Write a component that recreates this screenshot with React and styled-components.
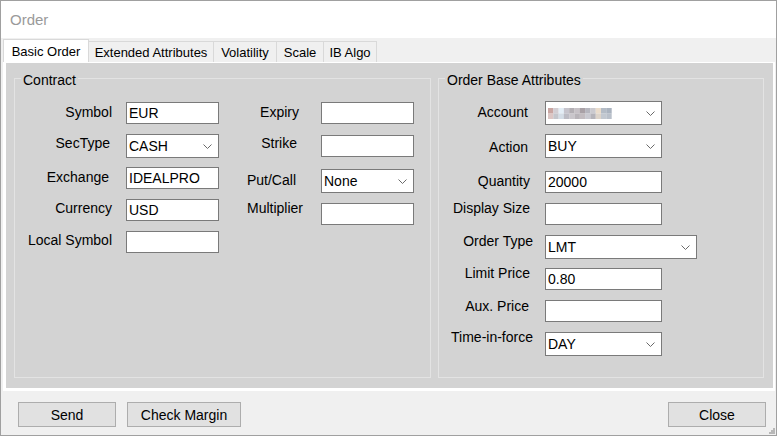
import styled, { createGlobalStyle } from "styled-components";

const GlobalStyle = createGlobalStyle`
  html, body {
    margin: 0;
    padding: 0;
    background: #ffffff;
  }
  body {
    font-family: "Liberation Sans", Arial, sans-serif;
  }
`;

// blurred account id in the reference, drawn as a pixel mosaic
const MOSAIC = [
  ["#c9a6a2", "#d2ced3", "#e4eef6", "#c6c4cc", "#b3afb4", "#c6c1c6", "#a9a1a6", "#b6b6be", "#cbcacf", "#eadccb", "#b4bcc6", "#aab3bf"],
  ["#dcc6c4", "#c4c6cc", "#d4dde6", "#bcbcc4", "#c9c6cb", "#b8b4b9", "#c2bcc0", "#c9c9d0", "#b5b4ba", "#ddd4ca", "#c2c8d0", "#b9c0ca"],
];

const TABS = [
  { name: "Basic Order", w: 86, active: true },
  { name: "Extended Attributes", w: 126 },
  { name: "Volatility", w: 64 },
  { name: "Scale", w: 48 },
  { name: "IB Algo", w: 54 },
];

const CONTRACT_A = [
  { label: "Symbol", value: "EUR", h: 32, dy: 2, pr: 0 },
  { label: "SecType", value: "CASH", combo: true, h: 33, dy: 1, pr: 2 },
  { label: "Exchange", value: "IDEALPRO", h: 32, dy: 2, pr: 3 },
  { label: "Currency", value: "USD", h: 32, dy: 1, pr: 0 },
  { label: "Local Symbol", value: "", h: 32, dy: 1, pr: 0 },
];

const CONTRACT_B = [
  { label: "Expiry", value: "", h: 33, dy: 2, pr: 5 },
  { label: "Strike", value: "", h: 34, dy: 0, pr: 7 },
  { label: "Put/Call", value: "None", combo: true, h: 34, dy: 3, pr: 8 },
  { label: "Multiplier", value: "", h: 34, dy: -3, pr: 1 },
];

const ORDER = [
  { label: "Account", combo: true, blurred: true, h: 33, dy: 3, pr: 5 },
  { label: "Action", value: "BUY", combo: true, h: 37, dy: 5, pr: 5 },
  { label: "Quantity", value: "20000", h: 32, dy: 2, pr: 3 },
  { label: "Display Size", value: "", h: 32, dy: -3, pr: 3 },
  { label: "Order Type", value: "LMT", combo: true, w: 152, h: 33, dy: -2, pr: 0 },
  { label: "Limit Price", value: "0.80", h: 32, dy: -3, pr: 3 },
  { label: "Aux. Price", value: "", h: 32, dy: -2, pr: 4 },
  { label: "Time-in-force", value: "DAY", combo: true, h: 32, dy: -3, pr: 0 },
];

function Chevron() {
  return (
    <ChevronIcon width="9" height="5" viewBox="0 0 9 5" aria-hidden>
      <polyline points="0.5,0.5 4.5,4.5 8.5,0.5" fill="none" stroke="#6a6a6a" strokeWidth="1" />
    </ChevronIcon>
  );
}

function Mosaic() {
  return (
    <svg width="64" height="11" viewBox="0 0 64 11" aria-hidden>
      {MOSAIC.map((row, r) =>
        row.map((c, i) => (
          <rect key={`${r}-${i}`} x={i * 5.3} y={r * 5.5} width="5.4" height="5.6" fill={c} />
        ))
      )}
    </svg>
  );
}

function Field({ f, labelW, gap, ctrlW }) {
  const w = f.w || ctrlW;
  return (
    <Row $h={f.h} $gap={gap}>
      <Label $w={labelW} $pr={f.pr} $dy={f.dy}>
        {f.label}
      </Label>
      {f.combo ? (
        <Combo $w={w}>
          {f.blurred ? <Mosaic /> : <span>{f.value}</span>}
          <Chevron />
        </Combo>
      ) : (
        <TextBox $w={w} value={f.value} readOnly />
      )}
    </Row>
  );
}

export default function App() {
  return (
    <>
      <GlobalStyle />
      <Window>
        <TitleBar>Order</TitleBar>

        <TabStrip>
          {TABS.map((t) => (
            <Tab key={t.name} $w={t.w} $active={t.active}>
              {t.name}
            </Tab>
          ))}
        </TabStrip>

        <TabPage>
          <Panel>
            <Group $w={417} $pt={14}>
              <Legend>Contract</Legend>
              <GroupBody>
                <Column>
                  {CONTRACT_A.map((f) => (
                    <Field key={f.label} f={f} labelW={91} gap={14} ctrlW={93} />
                  ))}
                </Column>
                <Column>
                  {CONTRACT_B.map((f) => (
                    <Field key={f.label} f={f} labelW={76} gap={17} ctrlW={93} />
                  ))}
                </Column>
              </GroupBody>
            </Group>

            <Group $w={326} $pt={13}>
              <Legend>Order Base Attributes</Legend>
              <Column>
                {ORDER.map((f) => (
                  <Field key={f.label} f={f} labelW={88} gap={12} ctrlW={117} />
                ))}
              </Column>
            </Group>
          </Panel>
        </TabPage>

        <ButtonBar>
          <Button $w={98}>Send</Button>
          <Button $w={114}>Check Margin</Button>
          <Button $w={98} $right>
            Close
          </Button>
        </ButtonBar>

        <Grip width="6" height="6" viewBox="0 0 6 6" aria-hidden>
          <rect x="4" y="0" width="2" height="2" fill="#b8b8b8" />
          <rect x="2" y="2" width="2" height="2" fill="#b8b8b8" />
          <rect x="4" y="2" width="2" height="2" fill="#b8b8b8" />
          <rect x="0" y="4" width="2" height="2" fill="#b8b8b8" />
          <rect x="2" y="4" width="2" height="2" fill="#b8b8b8" />
          <rect x="4" y="4" width="2" height="2" fill="#b8b8b8" />
        </Grip>
      </Window>
    </>
  );
}

const Window = styled.div`
  position: relative;
  width: 777px;
  height: 436px;
  box-sizing: border-box;
  border: 1px solid #a0a0a0;
  background: #f0f0f0;
  display: flex;
  flex-direction: column;
  font-family: "Liberation Sans", Arial, sans-serif;
  color: #000;
`;

const TitleBar = styled.div`
  height: 37px;
  flex-shrink: 0;
  display: flex;
  align-items: center;
  padding-left: 9px;
  background: #ffffff;
  font-size: 15px;
  color: #9a9a9a;
`;

const TabStrip = styled.div`
  height: 23px;
  margin-top: 1px;
  flex-shrink: 0;
  display: flex;
  align-items: flex-end;
  padding-left: 2px;
`;

const Tab = styled.div`
  box-sizing: border-box;
  width: ${({ $w }) => $w}px;
  height: ${({ $active }) => ($active ? 23 : 21)}px;
  padding-top: ${({ $active }) => ($active ? 0 : 1)}px;
  display: flex;
  align-items: center;
  justify-content: center;
  border: 1px solid #d9d9d9;
  border-bottom: none;
  background: ${({ $active }) => ($active ? "#ffffff" : "#f0f0f0")};
  font-size: 13px;
  white-space: nowrap;

  & + & {
    margin-left: -1px;
  }
`;

const TabPage = styled.div`
  width: 772px;
  height: 329px;
  margin-left: 2px;
  box-sizing: border-box;
  padding: 1px 2px 3px 3px;
  background: #ffffff;
  flex-shrink: 0;
`;

const Panel = styled.div`
  height: 100%;
  box-sizing: border-box;
  display: flex;
  gap: 7px;
  padding: 5px 9px 10px 8px;
  background: #d3d3d3;
`;

const Group = styled.fieldset`
  box-sizing: border-box;
  width: ${({ $w }) => $w}px;
  margin: 0;
  min-width: 0;
  padding: ${({ $pt }) => $pt}px 0 0 6px;
  border: 1px solid #e3e3e3;
`;

const Legend = styled.legend`
  padding: 4px 2px 0;
  margin: 0;
  font-size: 14px;
  line-height: 16px;
`;

const GroupBody = styled.div`
  display: flex;
  gap: 9px;
`;

const Column = styled.div`
  display: flex;
  flex-direction: column;
`;

const Row = styled.div`
  display: flex;
  align-items: flex-start;
  height: ${({ $h }) => $h}px;
  gap: ${({ $gap }) => $gap}px;
`;

const Label = styled.div`
  flex-shrink: 0;
  box-sizing: border-box;
  width: ${({ $w }) => $w}px;
  padding-right: ${({ $pr }) => $pr}px;
  margin-top: ${({ $dy }) => $dy}px;
  text-align: right;
  font-size: 14px;
  line-height: 16px;
  white-space: nowrap;
`;

const TextBox = styled.input`
  box-sizing: border-box;
  width: ${({ $w }) => $w}px;
  height: 22px;
  margin: 0;
  padding: 0 2px;
  border: 1px solid #7a7a7a;
  border-radius: 0;
  background: #ffffff;
  font: 14px "Liberation Sans", Arial, sans-serif;
  color: #000;
  outline: none;
`;

const Combo = styled.div`
  box-sizing: border-box;
  width: ${({ $w }) => $w}px;
  height: 24px;
  display: flex;
  align-items: center;
  padding-left: 2px;
  border: 1px solid #7a7a7a;
  background: #ffffff;
  font-size: 14px;
  line-height: 16px;
`;

const ChevronIcon = styled.svg`
  margin-left: auto;
  margin-right: 6px;
  flex-shrink: 0;
`;

const ButtonBar = styled.div`
  flex: 1;
  display: flex;
  align-items: flex-start;
  gap: 11px;
  padding: 11px 10px 0 17px;
`;

const Button = styled.button`
  box-sizing: border-box;
  width: ${({ $w }) => $w}px;
  height: 25px;
  margin: 0;
  margin-left: ${({ $right }) => ($right ? "auto" : "0")};
  padding: 0;
  border: 1px solid #adadad;
  border-radius: 0;
  background: #e1e1e1;
  font: 14px "Liberation Sans", Arial, sans-serif;
  color: #000;
`;

const Grip = styled.svg`
  position: absolute;
  right: 1px;
  bottom: 1px;
`;
